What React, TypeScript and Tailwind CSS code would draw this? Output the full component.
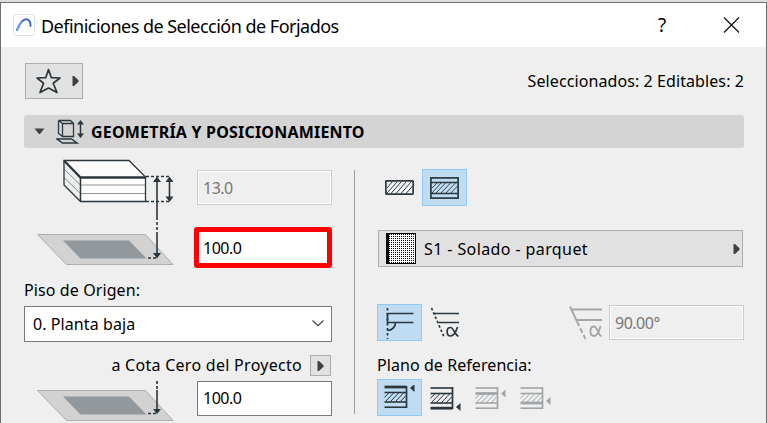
import React from "react";

const INK = "#2b373d";

function ArrowRight() {
  return (
    <svg width="7" height="10" viewBox="0 0 7 10">
      <path d="M0.5 0L2 0L6.5 4.2V5.8L2 10H0.5Z" fill="#404040" />
    </svg>
  );
}

function AppLogo() {
  return (
    <svg width="22" height="22" viewBox="0 0 22 22">
      <rect x="0.5" y="0.5" width="21" height="21" rx="3" fill="#fdfdfd" stroke="#e2e2e2" />
      <path d="M4 16C6.5 10 9.5 5.2 13 5.2C16.300 5.200 17.500 8 17.500 12" fill="none" stroke="#4068c8" strokeWidth="1.900" strokeLinecap="round" />
      <path d="M4 16C5.200 13.200 6.500 10.600 8 8.600" fill="none" stroke="#6d9af0" strokeWidth="1.900" strokeLinecap="round" />
    </svg>
  );
}

function Star() {
  return (
    <svg width="26" height="26" viewBox="0 0 26 26">
      <path d="M13.500 1.500L16.400 9.700L25 10L18.200 15.200L22 24.500L13.500 20.100L5 24.500L8.500 15.200L2 10L10.700 9.700Z" fill="none" stroke={INK} strokeWidth="1.700" strokeLinejoin="round" />
    </svg>
  );
}

function GeometryIcon() {
  return (
    <svg width="30" height="26" viewBox="0 0 30 26" fill="none" stroke={INK} strokeWidth="1.300">
      <path d="M6.500 4.500H17.500V17.500H6.500ZM2.500 1.500H14.500L17.500 4.500M2.500 1.500V14.500L6.500 17.500M2.500 1.500L6.500 4.500" />
      <path d="M1 20H15.500L21 24H6.500Z" strokeWidth="1.500" />
      <path d="M24.500 3V18" strokeWidth="1.500" />
      <path d="M24.500 1L28 5.500H21ZM24.500 19L28 14.500H21Z" fill={INK} stroke="none" />
    </svg>
  );
}

function Plane({ y }: { y: number }) {
  return (
    <g>
      <path d={`M0.500 ${y}H108.500L136 ${y + 30}H29.500Z`} fill="#d2d2d2" stroke="#a6a9ab" strokeWidth="0.900" />
      <path d={`M26 ${y + 6}H92L109.500 ${y + 24}H43.500Z`} fill="#92989b" />
    </g>
  );
}

function SlabDiagram() {
  return (
    <svg width="137" height="108" viewBox="0 0 137 108" fill="none">
      <Plane y={75.500} />
      <path d="M27 1.500H92L108.500 18V42.500H43.500L27 26Z" fill="#fff" />
      <path d="M27 1.500H92L108.500 18H43.500Z" fill="#fafafa" />
      <path d="M27 1.500L43.500 18V42.500L27 26Z" fill="#eee" />
      <path d="M43.500 26H108M43.500 34.500H108M27 10L43.500 26M27 18.500L43.500 34.500" stroke="#8b9294" />
      <path d="M27 1.500H92L108.500 18V42.500H43.500L27 26Z" stroke={INK} strokeWidth="1.300" />
      <path d="M43.500 18V42" stroke={INK} strokeWidth="1.500" />
      <path d="M27 1.500L43.500 18.500H108.500" stroke={INK} strokeWidth="2.300" />
      <path d="M109 17.500H132M109 42.500H132M111 99H120" stroke={INK} strokeWidth="1.500" strokeDasharray="3 2" />
      <path d="M132.500 21V40M120 21V58M120 76V97" stroke={INK} strokeWidth="1.600" />
      <path d="M120 58V76" stroke={INK} strokeWidth="1.600" strokeDasharray="3 2" />
      <path d="M132.500 17.500L136.500 23H128.500ZM132.500 43L136.500 37.500H128.500ZM120 17.500L124 23H116ZM120 99.500L124 94H116Z" fill={INK} />
    </svg>
  );
}

function ZeroDiagram() {
  return (
    <svg width="137" height="42" viewBox="0 0 137 42" fill="none">
      <Plane y={9.500} />
      <path d="M111 32.500H120" stroke={INK} strokeWidth="1.500" strokeDasharray="3 2" />
      <path d="M120 0V9" stroke={INK} strokeWidth="1.600" strokeDasharray="3 2" />
      <path d="M120 9V30" stroke={INK} strokeWidth="1.600" />
      <path d="M120 33L124 28H116Z" fill={INK} />
    </svg>
  );
}

function BasicHatch() {
  return (
    <svg width="29" height="15" viewBox="0 0 29 15" fill="none" stroke={INK}>
      <rect x="0.900" y="0.900" width="27.200" height="13.200" rx="0.500" fill="#f5f5f5" strokeWidth="1.700" />
      <path d="M2 8L7 2M2 13L12 2M6 13.500L16 2M11 13.500L21 2M16 13.500L26 2M21 13.500L27.500 6" strokeWidth="1" />
    </svg>
  );
}

function CompositeHatch() {
  return (
    <svg width="29" height="22" viewBox="0 0 29 22" fill="none" stroke={INK}>
      <rect x="0.900" y="0.900" width="27.200" height="20.200" strokeWidth="1.700" />
      <path d="M1 5.500H28M1 16.500H28" strokeWidth="1.300" />
      <path d="M2 11L7 6M2 16L11 6M6 16L15.500 6M11 16L20.500 6M16 16L25.500 6M21 16L27.500 9" strokeWidth="0.900" />
    </svg>
  );
}

function PerpendicularEdge() {
  return (
    <svg width="30" height="32" viewBox="0 0 30 32" fill="none" stroke={INK} strokeWidth="1.700">
      <path d="M2.500 1V32" strokeDasharray="2.500 2.500" />
      <path d="M28.500 6.500H2.500V15.500H28.500M10.500 15.500C10.500 20 7 23.500 2.500 23.500" />
    </svg>
  );
}

function CustomEdge() {
  return (
    <svg width="31" height="32" viewBox="0 0 31 32" fill="none" stroke={INK} strokeWidth="1.700">
      <path d="M1.500 1L14.500 31" strokeDasharray="2.500 2.200" />
      <path d="M4 6.500H29M8.500 15.500H29" />
      <path d="M27.500 20C26 25 23.500 29 20.500 29C16 29 16 20.500 20.500 20.500C24 20.500 25 29 28.500 29" />
    </svg>
  );
}

function DisabledEdge() {
  return (
    <svg width="34" height="34" viewBox="0 0 34 34" fill="none" stroke="#a1a5a7" strokeWidth="1.800">
      <path d="M1 0.500L8 15.500" />
      <path d="M8 15.500L16.500 33" strokeDasharray="5 2.500" />
      <path d="M2.500 3.500H33M7.500 14H33" />
      <path d="M31.500 20C30 26 27.500 30 25 30C20.200 30 20.200 20.500 25 20.500C28.500 20.500 29.500 30 32.500 30" />
    </svg>
  );
}

// Position of the reference plane within the slab section
function ReferencePlane({ kind, muted }: { kind: "top" | "bottom" | "coreTop" | "coreBottom"; muted?: boolean }) {
  const color = muted ? "#a1a5a7" : INK;
  const width = (k: string) => (k === kind ? 2.800 : 1.600);
  const tip = { top: 3, bottom: 21, coreTop: 7.500, coreBottom: 15 }[kind];
  return (
    <svg width="31" height="25" viewBox="0 0 31 25" fill="none" stroke={color}>
      <path d="M0.500 2H22.500" strokeWidth={width("top")} />
      <path d="M0.500 7.500H22.500" strokeWidth={width("coreTop")} />
      <path d="M0.500 17H22.500" strokeWidth={width("coreBottom")} />
      <path d="M0.500 22.200H22.500" strokeWidth={width("bottom")} />
      <path d="M22.500 1V23" strokeWidth="1.700" />
      <path d="M0.500 12.500L5 7.500M1.500 16.500L10 7.500M6.500 16.500L15 7.500M11.500 16.500L20 7.500M16.500 16.500L22 10.500" strokeWidth="1" />
      <path d={`M26 ${tip}L30.500 ${tip - 4}V${tip + 4}Z`} fill={color} stroke="none" />
    </svg>
  );
}

function Field({ value, disabled }: { value: string; disabled?: boolean }) {
  return (
    <div className={disabled
      ? "flex h-[35px] w-[135px] items-center border border-[#cccccc] bg-[#efefef] pl-[5px] text-[#777] shadow-[inset_0_0_0_1px_#fff]"
      : "flex h-[35px] w-[135px] items-center border border-[#7a7a7a] bg-white pb-px pl-[5px]"}>
      <span className="tracking-[-0.5px]">{value}</span>
    </div>
  );
}

const selected = "flex h-[37px] w-[45px] items-center justify-center border border-[#91c9f7] bg-[#c0dcf3]";

export default function App() {
  return (
    <div className="h-[423px] w-[767px] overflow-hidden bg-[#dedede] pt-[2px] font-['Noto_Sans','Open_Sans',sans-serif] text-[16px] leading-[22px] whitespace-nowrap text-black">
      <div className="h-[421px] border-x border-t border-[#6e6e6e] bg-[#efefef]">
        <header className="flex h-11 items-center bg-white pl-3">
          <div className="pb-[1px]"><AppLogo /></div>
          <h1 className="ml-[6px] pt-[1px] text-[18px] tracking-[-0.52px]">Definiciones de Selección de Forjados</h1>
          <span className="ml-auto w-[10px] text-center text-[19px]">?</span>
          <svg className="mr-[26px] ml-[56px]" width="17" height="17" viewBox="0 0 17 17"><path d="M1 0.500L16 15.500M16 0.500L1 15.500" stroke="#111" strokeWidth="1.200" /></svg>
        </header>

        <div className="flex h-[68px] items-center justify-between pr-[22px] pl-6">
          <button className="flex h-9 w-[58px] items-center justify-between border border-[#adadad] bg-[#e1e1e1] pr-[3px] pl-[9px]">
            <Star /><ArrowRight />
          </button>
          <span className="tracking-[0.09px]">Seleccionados: 2 Editables: 2</span>
        </div>

        <section className="pr-[22px] pl-[23px]">
          <h2 className="flex h-[33px] items-center rounded-[3px] bg-[#d4d4d4] pl-[10px] text-[16px] font-bold">
            <svg width="11" height="7" viewBox="0 0 11 7"><path d="M0.500 0.500H10.500L6 6H5Z" fill="#404040" /></svg>
            <span className="ml-[11px]"><GeometryIcon /></span>
            <span className="ml-[5px] tracking-[0.2px]">GEOMETRÍA Y POSICIONAMIENTO</span>
          </h2>

          <div className="flex">
            <div className="w-[308px]">
              <div className="flex justify-between pt-[11px] pl-[13px]">
                <SlabDiagram />
                <div className="flex flex-col items-end pt-[11px]">
                  <Field value="13.0" disabled />
                  <div className="mt-[22px] flex h-[41px] w-[138px] items-center rounded-[3px] border-[5px] border-[#fe0000] bg-white pl-1">
                    <span className="tracking-[-0.5px]">100.0</span>
                  </div>
                </div>
              </div>
              <div className="mt-[11px] h-[27px] tracking-[0.1px]">Piso de Origen:</div>
              <div className="flex h-9 items-center justify-between border border-[#7a7a7a] bg-white pr-[7px] pb-px pl-2">
                <span className="tracking-[0.08px]">0. Planta baja</span>
                <svg width="12" height="7" viewBox="0 0 12 7"><path d="M0.500 0.500L6 5.700L11.500 0.500" fill="none" stroke="#444" strokeWidth="1.200" /></svg>
              </div>
              <div className="mt-[13px] flex h-[21px] items-center justify-end pr-[1px]">
                <span className="pb-[2px] tracking-[0.28px]">a Cota Cero del Proyecto</span>
                <button className="ml-[8px] flex h-[21px] w-[21px] items-center justify-center border border-[#adadad] bg-[#e1e1e1]"><ArrowRight /></button>
              </div>
              <div className="mt-[5px] flex justify-between pl-[13px]">
                <ZeroDiagram />
                <Field value="100.0" />
              </div>
            </div>

            <div className="mt-[22px] ml-[22px] h-[244px] w-px bg-[#a0a0a0]" />

            <div className="ml-[22px] w-[367px] pt-[21px]">
              <div className="flex items-center pl-2">
                <BasicHatch />
                <button className={`ml-2 ${selected}`}><CompositeHatch /></button>
              </div>
              <button className="mt-[24px] ml-[1px] flex h-[37px] w-[365px] items-center border border-[#adadad] bg-[#e1e1e1] pr-[2px] pl-[7px]">
                <svg width="30" height="31" viewBox="0 0 30 31" shapeRendering="crispEdges">
                  <defs><pattern id="dots" x="1" y="1" width="2" height="2" patternUnits="userSpaceOnUse"><rect width="2" height="2" fill="#fff" /><rect width="1" height="1" fill="#000" /></pattern></defs>
                  <rect width="30" height="31" fill="#000" />
                  <rect x="3" y="1" width="26" height="29" fill="url(#dots)" />
                </svg>
                <span className="ml-[8px] tracking-[0.4px]">S1 - Solado - parquet</span>
                <span className="ml-auto"><ArrowRight /></span>
              </button>
              <div className="mt-[37px] flex h-[37px] items-center">
                <button className={selected}><PerpendicularEdge /></button>
                <span className="ml-2"><CustomEdge /></span>
                <span className="ml-auto"><DisabledEdge /></span>
                <div className="ml-[6px]"><Field value="90.00°" disabled /></div>
              </div>
              <div className="mt-[13px] h-[25px] tracking-[0.07px]">Plano de Referencia:</div>
              <div className="flex items-center">
                <button className={selected}><ReferencePlane kind="top" /></button>
                <span className="ml-2 pt-[2px]"><ReferencePlane kind="bottom" /></span>
                <span className="ml-[14px] pt-[2px]"><ReferencePlane kind="coreTop" muted /></span>
                <span className="ml-[14px] pt-[2px]"><ReferencePlane kind="coreBottom" muted /></span>
              </div>
            </div>
          </div>
        </section>
      </div>
    </div>
  );
}
